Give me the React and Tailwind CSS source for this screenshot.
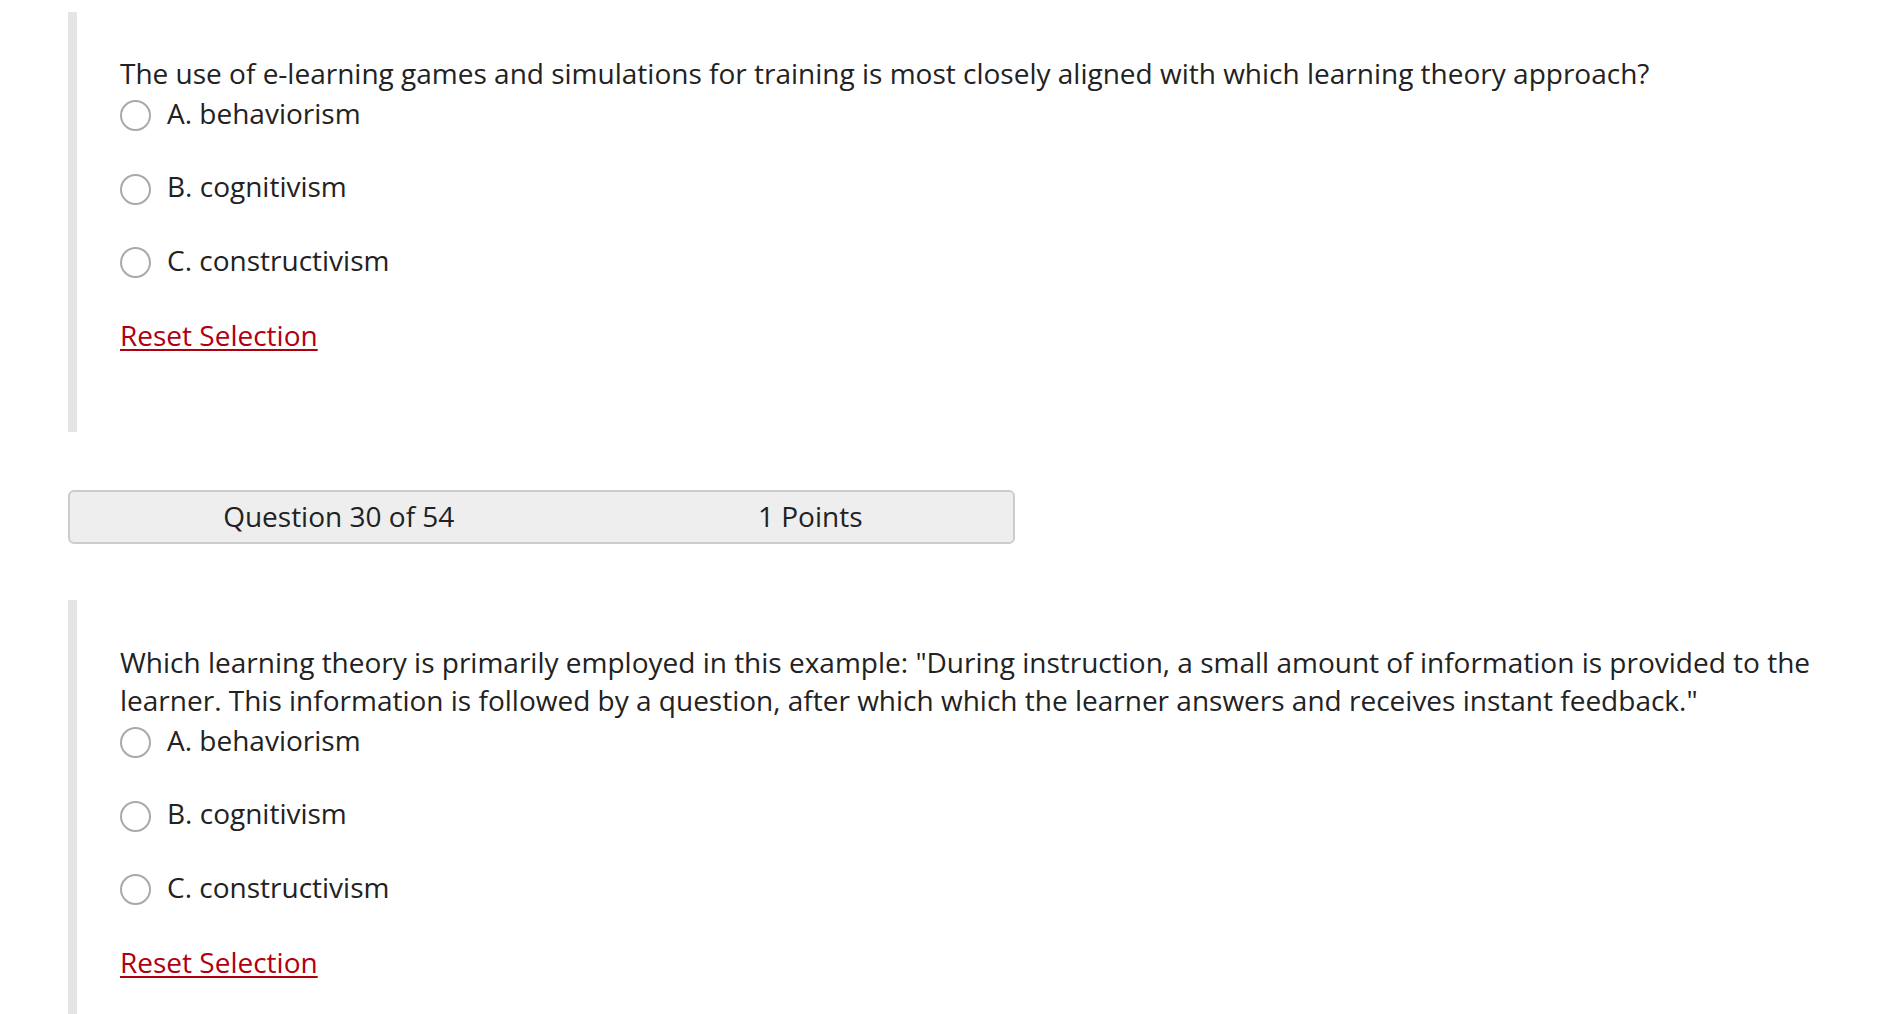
import React from "react";

const questions = [
  {
    id: 29,
    text: "The use of e-learning games and simulations for training is most closely aligned with which learning theory approach?",
  },
  {
    id: 30,
    text: 'Which learning theory is primarily employed in this example: "During instruction, a small amount of information is provided to the learner. This information is followed by a question, after which which the learner answers and receives instant feedback."',
  },
];

const options = ["A. behaviorism", "B. cognitivism", "C. constructivism"];

const Radio = () => (
  <span className="mt-[5.5px] w-[31px] h-[31px] shrink-0 rounded-full border-2 border-[#a9a9a9] bg-white" />
);

const QuestionBlock = ({ text }) => (
  <section className="border-l-[9px] border-[#e5e5e5] pl-[43px] pt-[42.4px] pb-[79px]">
    <p className="text-[28px] leading-[38.4px]">{text}</p>
    <div className="mt-[2px] flex flex-col gap-[37.5px]">
      {options.map((opt) => (
        <label key={opt} className="flex items-start gap-[16px] h-[36px] text-[28px] leading-[36px] cursor-pointer">
          <Radio />
          <span>{opt}</span>
        </label>
      ))}
    </div>
    <div className="mt-[39.5px] h-[36px] text-[28px] leading-[36px]">
      <a href="#" className="text-[#b0000f] underline decoration-2 underline-offset-[3px]">
        Reset Selection
      </a>
    </div>
  </section>
);

const QuestionHeader = ({ num, total, points }) => (
  <div className="w-[947px] h-[54px] grid grid-cols-2 rounded-[6px] border-2 border-[#cccccc] bg-[#eeeeee] text-[28px] leading-[48px]">
    <div className="pl-[66px] text-center">Question {num} of {total}</div>
    <div className="pl-[66px] text-center">{points} Points</div>
  </div>
);

export default function App() {
  return (
    <div
      className="min-h-screen bg-white text-[#222222] pt-[12px] pl-[68px] pr-[42px]"
      style={{ fontFamily: '"Open Sans", sans-serif' }}
    >
      <QuestionBlock text={questions[0].text} />
      <div className="mt-[58px]">
        <QuestionHeader num={30} total={54} points={1} />
      </div>
      <div className="mt-[56px]">
        <QuestionBlock text={questions[1].text} />
      </div>
    </div>
  );
}
